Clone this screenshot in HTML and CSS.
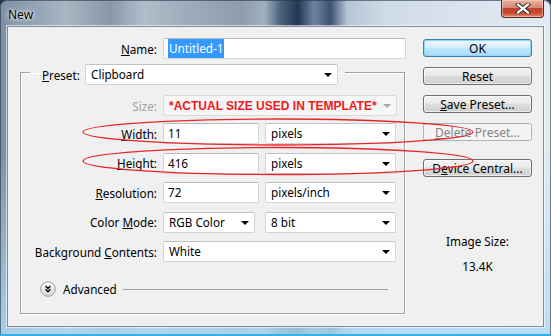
FILE: index.html
```html
<!DOCTYPE html>
<html lang="en">
<head>
    <meta charset="UTF-8">
    <title>New</title>
    <link rel="stylesheet" href="styles.css">
</head>
<body>
    <div class="window">
        <div class="titlebar">
            <span class="title">New</span>
            <div class="close-btn">
                <svg width="16" height="11" viewBox="0 0 16 11">
                    <path d="M3 1.5 L13 9.5 M13 1.5 L3 9.5" stroke="#3a3a3a" stroke-width="4.2" stroke-linecap="square" fill="none"/>
                    <path d="M3 1.5 L13 9.5 M13 1.5 L3 9.5" stroke="#ffffff" stroke-width="2.2" stroke-linecap="square" fill="none"/>
                </svg>
            </div>
        </div>
        <div class="client">
            <div class="left">
                <div class="row name-row">
                    <span class="lbl"><u>N</u>ame:</span>
                    <div class="field name-field"><span class="selected">Untitled-1</span></div>
                </div>
                <fieldset class="group">
                    <legend class="preset">
                        <span class="lbl-preset"><u>P</u>reset:</span>
                        <div class="combo preset-combo">Clipboard</div>
                    </legend>
                    <div class="row size-row">
                        <span class="lbl disabled">Size:</span>
                        <div class="combo combo-disabled size-combo"><span class="warn">*ACTUAL SIZE USED IN TEMPLATE*</span></div>
                    </div>
                    <div class="row width-row">
                        <span class="lbl"><u>W</u>idth:</span>
                        <div class="field num">11</div>
                        <div class="combo unit">pixels</div>
                    </div>
                    <div class="row">
                        <span class="lbl"><u>H</u>eight:</span>
                        <div class="field num">416</div>
                        <div class="combo unit">pixels</div>
                    </div>
                    <div class="row">
                        <span class="lbl"><u>R</u>esolution:</span>
                        <div class="field num">72</div>
                        <div class="combo unit">pixels/inch</div>
                    </div>
                    <div class="row">
                        <span class="lbl">Color <u>M</u>ode:</span>
                        <div class="combo mode">RGB Color</div>
                        <div class="combo unit">8 bit</div>
                    </div>
                    <div class="row">
                        <span class="lbl">Background <u>C</u>ontents:</span>
                        <div class="combo contents">White</div>
                    </div>
                    <div class="advanced">
                        <svg class="adv-icon" width="16" height="16" viewBox="0 0 16 16">
                            <defs>
                                <linearGradient id="advg" x1="0" y1="0" x2="0" y2="1">
                                    <stop offset="0" stop-color="#ffffff"/>
                                    <stop offset="1" stop-color="#d6d6d6"/>
                                </linearGradient>
                            </defs>
                            <circle cx="8" cy="8" r="7.3" fill="url(#advg)" stroke="#9a9a9a" stroke-width="1"/>
                            <path d="M5.5 5 L8 7.5 L10.5 5 M5.5 8.3 L8 10.8 L10.5 8.3" stroke="#000" stroke-width="1.4" fill="none"/>
                        </svg>
                        <span class="adv-text">Advanced</span>
                        <span class="adv-line"></span>
                    </div>
                </fieldset>
            </div>
            <div class="right">
                <button class="btn btn-default">OK</button>
                <button class="btn">Reset</button>
                <button class="btn"><u>S</u>ave Preset...</button>
                <button class="btn btn-disabled"><u>D</u>elete Preset...</button>
                <button class="btn btn-device">D<u>e</u>vice Central...</button>
                <div class="image-size">
                    <div>Image Size:</div>
                    <div class="size-value">13.4K</div>
                </div>
            </div>
        </div>
        <svg class="marks" width="551" height="336" viewBox="0 0 551 336">
            <ellipse cx="278" cy="132" rx="195" ry="13" fill="none" stroke="#e8262a" stroke-width="1.3"/>
            <ellipse cx="278" cy="161" rx="195" ry="13.5" fill="none" stroke="#e8262a" stroke-width="1.3"/>
        </svg>
    </div>
</body>
</html>
```

FILE: styles.css
```css
* {
    margin: 0;
    padding: 0;
    box-sizing: border-box;
}
body {
    width: 551px;
    height: 336px;
    overflow: hidden;
    font-family: 'Noto Sans', 'Open Sans', Arial, sans-serif;
    font-size: 11.7px;
    color: #000;
    background: #22344a;
}
.window {
    position: relative;
    height: 336px;
    display: flex;
    flex-direction: column;
    padding: 0 7px 9px;
    border-radius: 7px 7px 0 0;
    background:
        linear-gradient(180deg, rgba(255, 255, 255, 0) 0, rgba(255, 255, 255, 0) 45%, rgba(175, 220, 245, 0.85) 100%),
        linear-gradient(90deg, #7d8fa2 0, #93a3b4 6%, #a9b6c3 12%, #8797a9 20%, #b1bdca 26%, #9eabba 34%, #8c9cad 44%, #a2b1c1 48%, #4a5f78 51%, #223753 54%, #6f83a0 57%, #3d5270 60%, #b6c5d4 63%, #cfdbe7 70%, #dae4ee 85%, #e2eaf2 100%);
    box-shadow: inset 0 -2px 0 #38aee6, inset 0 0 0 1px rgba(40, 55, 70, 0.6);
}
.titlebar {
    height: 26px;
    display: flex;
    justify-content: space-between;
    align-items: flex-start;
}
.title {
    margin: 6px 0 0 1px;
    font-size: 12px;
    text-shadow: 0 0 6px #fff, 0 0 3px #fff;
}
.close-btn {
    width: 43px;
    height: 18px;
    display: flex;
    align-items: center;
    justify-content: center;
    border: 1px solid #5a2318;
    border-top: none;
    border-radius: 0 0 4px 4px;
    background: linear-gradient(#eab0a3 0, #d88876 45%, #c2412b 50%, #c84b34 78%, #e2937a 100%);
    box-shadow: inset 0 0 0 1px rgba(255, 220, 210, 0.5);
}
.client {
    flex: 1;
    display: flex;
    background: #f0f0f0;
    border: 1px solid #838c96;
    box-shadow: 0 0 0 1px rgba(255, 255, 255, 0.6);
}
.left {
    width: 398px;
    padding: 11px 0 0 12px;
}
.row {
    display: flex;
    align-items: center;
    height: 21px;
    margin-top: 8.5px;
}
.lbl {
    width: 136px;
    margin-right: 6px;
    text-align: right;
    white-space: nowrap;
}
.disabled {
    color: #a0a0a0;
}
.name-row {
    margin-top: 0;
}
.name-row .lbl {
    width: 137px;
}
.field {
    height: 21px;
    background: #fff;
    border: 1px solid #d4d4d4;
    border-top-color: #b9b9b9;
    border-radius: 2px;
    padding-left: 4px;
    line-height: 19px;
}
.name-field {
    width: 243px;
}
.selected {
    background: #3399ff;
    color: #fff;
    padding: 1px 1px 2px;
}
.num {
    width: 96px;
    margin-right: 6px;
}
.group {
    margin-top: 1px;
    width: 385px;
    border: 1px solid #a0a0a0;
    box-shadow: inset 1px 1px 0 #fff, 1px 1px 0 #fff;
    padding: 0 0 16px;
}
.preset {
    display: flex;
    align-items: center;
    margin-left: 9px;
    padding: 4px 7px 0 12px;
}
.lbl-preset {
    width: 43px;
}
.combo {
    position: relative;
    height: 21px;
    background: #fff;
    border: 1px solid #d4d4d4;
    border-top-color: #c2c2c2;
    border-radius: 2px;
    padding-left: 5px;
    line-height: 19px;
    white-space: nowrap;
}
.combo::after {
    content: '';
    position: absolute;
    right: 5px;
    top: 8px;
    border-left: 4px solid transparent;
    border-right: 4px solid transparent;
    border-top: 4px solid #000;
}
.preset-combo {
    width: 253px;
}
.size-row {
    margin-top: 10px;
}
.size-combo {
    width: 234px;
}
.combo-disabled {
    background: #f7f7f7;
    border-color: #dadada;
}
.combo-disabled::after {
    border-top-color: #a8a8a8;
}
.warn {
    font-family: 'Liberation Sans', Arial, sans-serif;
    font-size: 12px;
    font-weight: bold;
    color: #f01a1a;
}
.width-row {
    margin-top: 7px;
}
.unit {
    width: 131px;
}
.mode {
    width: 92px;
    margin-right: 10px;
}
.contents {
    width: 233px;
}
.advanced {
    display: flex;
    align-items: center;
    height: 16px;
    margin: 19px 0 0 19px;
}
.adv-text {
    margin-left: 7px;
}
.adv-line {
    flex: 1;
    height: 1px;
    margin: 0 16px 0 6px;
    background: #a0a0a0;
}
.right {
    width: 109px;
    margin-left: 17px;
    padding-top: 12px;
}
.btn {
    display: block;
    width: 109px;
    height: 18px;
    margin-bottom: 10px;
    border: 1px solid #707070;
    border-radius: 3px;
    background: linear-gradient(#f2f2f2 0, #ebebeb 45%, #dddddd 50%, #cfcfcf 100%);
    box-shadow: inset 0 0 0 1px rgba(255, 255, 255, 0.6);
    font: inherit;
    font-size: 12px;
    line-height: 15px;
    text-align: center;
    color: #000;
}
.btn-default {
    border-color: #3c7fb1;
    background: linear-gradient(#eaf6fd 0, #d9f0fc 45%, #bee6fd 50%, #a7d9f5 100%);
    box-shadow: inset 0 0 0 1px #8fd6f6;
}
.btn-disabled {
    border-color: #adb2b5;
    background: #f4f4f4;
    color: #838383;
    box-shadow: none;
}
.btn-device {
    margin-top: 18px;
}
.image-size {
    margin-top: 57px;
    text-align: center;
    line-height: 15px;
}
.size-value {
    margin-top: 10px;
}
.marks {
    position: absolute;
    left: 0;
    top: 0;
    pointer-events: none;
}
```
